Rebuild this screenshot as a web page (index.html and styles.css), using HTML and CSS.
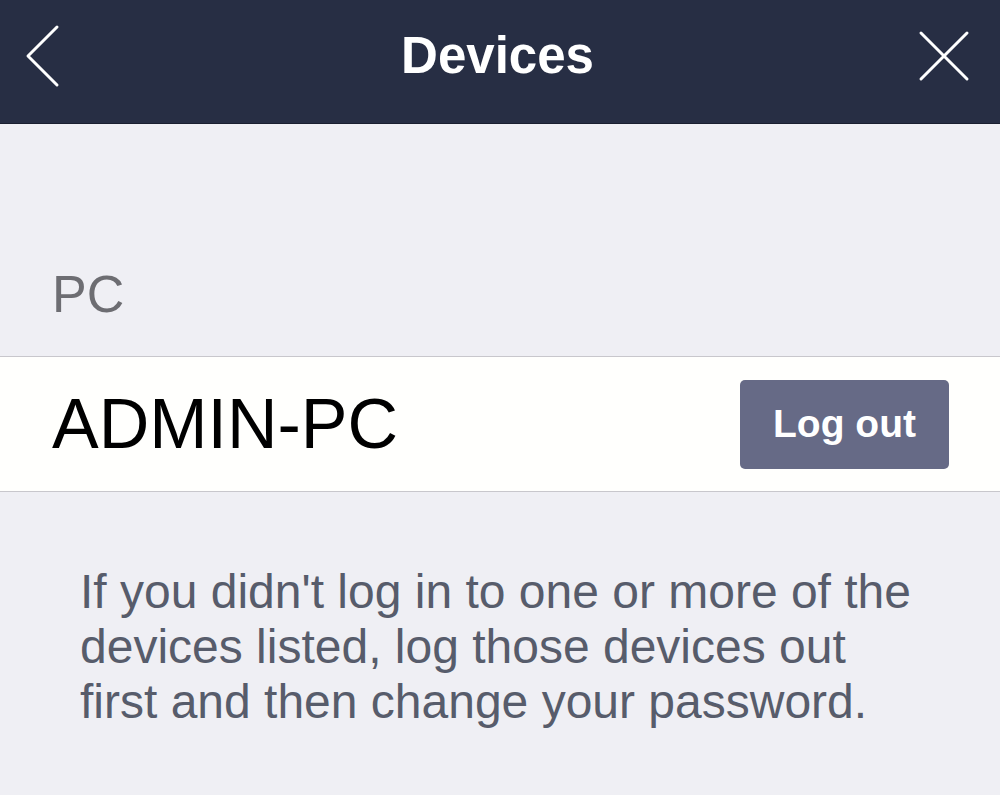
FILE: index.html
```html
<!DOCTYPE html>
<html>
<head>
    <title>Devices</title>
    <link rel="stylesheet" href="styles.css">
</head>
<body>
    <div class="header">
        <button class="icon-btn back" aria-label="Back">
            <svg width="40" height="64" viewBox="0 0 40 64">
                <polyline points="33,3 4,32 33,61" fill="none" stroke="#fff" stroke-width="3" stroke-linecap="round" stroke-linejoin="round"/>
            </svg>
        </button>
        <h1>Devices</h1>
        <button class="icon-btn close" aria-label="Close">
            <svg width="54" height="54" viewBox="0 0 54 54">
                <path d="M4 4 L50 50 M50 4 L4 50" fill="none" stroke="#fff" stroke-width="3" stroke-linecap="round"/>
            </svg>
        </button>
    </div>

    <div class="section-label">PC</div>

    <div class="device-row">
        <span class="device-name">ADMIN-PC</span>
        <button class="logout-btn">Log out</button>
    </div>

    <p class="note">If you didn't log in to one or more of the devices listed, log those devices out first and then change your password.</p>
</body>
</html>
```

FILE: styles.css
```css
body {
    margin: 0;
    background-color: #efeff4;
    font-family: "Liberation Sans", Arial, sans-serif;
}

.header {
    height: 111px;
    background-color: #272e44;
    border-bottom: 1px solid #1a1f30;
    display: grid;
    grid-template-columns: 1fr auto 1fr;
    align-items: center;
    padding: 0 29px 12px 24px;
}

.header h1 {
    margin: 0;
    color: #fff;
    font-size: 51px;
    font-weight: bold;
    line-height: 60px;
}

.icon-btn {
    background: none;
    border: none;
    padding: 0;
    display: flex;
    cursor: pointer;
}

.close {
    justify-self: end;
}

.section-label {
    margin: 140px 0 32px 52px;
    font-size: 52px;
    line-height: 60px;
    color: #6d6d72;
}

.device-row {
    height: 134px;
    background-color: #fffffd;
    border-top: 1px solid #c8c7cc;
    border-bottom: 1px solid #c8c7cc;
    display: flex;
    align-items: center;
    justify-content: space-between;
    padding: 0 51px 0 52px;
}

.device-name {
    font-size: 70px;
    line-height: 80px;
    color: #000;
}

.logout-btn {
    width: 209px;
    height: 89px;
    background-color: #666a86;
    color: #fff;
    border: none;
    border-radius: 5px;
    font-family: inherit;
    font-size: 39px;
    font-weight: bold;
    cursor: pointer;
}

.note {
    margin: 72px 0 0;
    padding: 0 70px 0 80px;
    font-size: 48px;
    line-height: 55px;
    color: #575c6b;
}
```
